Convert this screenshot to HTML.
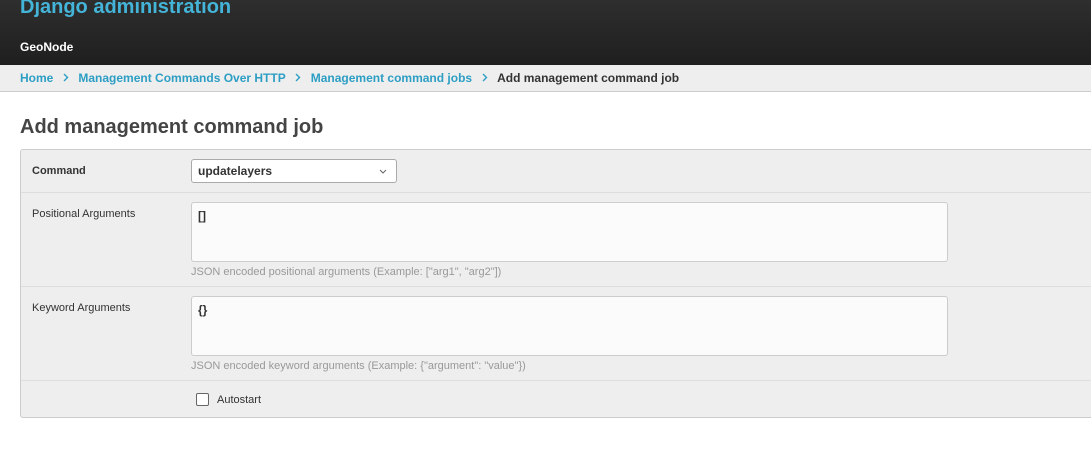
<!DOCTYPE html>
<html><head><meta charset="utf-8"><style>
*{box-sizing:border-box;margin:0;padding:0}
body{width:1091px;height:462px;overflow:hidden;background:#fff;font-family:"Liberation Sans",sans-serif;color:#333}
#header{position:absolute;top:0;left:0;width:1091px;height:65px;background:linear-gradient(#2e2e2e,#1f1f1f)}
#header h1{position:absolute;left:20px;top:-4px;font-size:20px;color:#44b4d8;font-weight:bold}
#header .geo{position:absolute;left:20px;top:40px;font-size:12px;color:#fff;font-weight:bold}
#bc{position:absolute;top:65px;left:0;width:1091px;height:27px;background:#eee;border-bottom:1px solid #ccc;font-size:12px;padding:6px 20px;font-weight:bold;white-space:nowrap}
#bc a{color:#2d9ec4;text-decoration:none}
#bc .s{display:inline-block;width:25px;text-align:center}
#bc .c{color:#333}
h2{position:absolute;left:20px;top:116px;font-size:20px;color:#444;font-weight:bold}
#form{position:absolute;left:20px;top:149px;width:1080px;height:269px;background:#eee;border:1px solid #ccc;border-radius:3px}
.row{position:absolute;left:0;width:1080px;border-bottom:1px solid #ddd}
.lab{position:absolute;left:11px;font-size:11px;color:#333}
.in{position:absolute;left:170px;background:#fbfbfb;border:1px solid #ccc;border-radius:3px;font-size:12px;color:#333;font-weight:bold;padding:6px 6px}
.help{position:absolute;left:170px;font-size:11px;color:#999}
</style></head><body>
<div id="header"><h1>Django administration</h1><div class="geo">GeoNode</div></div>
<div id="bc"><a>Home</a><span class="s"><svg width="6" height="9" viewBox="0 0 6 9"><path d="M1 1l3.5 3.5L1 8" fill="none" stroke="#2d9ec4" stroke-width="1.4"/></svg></span><a>Management Commands Over HTTP</a><span class="s"><svg width="6" height="9" viewBox="0 0 6 9"><path d="M1 1l3.5 3.5L1 8" fill="none" stroke="#2d9ec4" stroke-width="1.4"/></svg></span><a>Management command jobs</a><span class="s"><svg width="6" height="9" viewBox="0 0 6 9"><path d="M1 1l3.5 3.5L1 8" fill="none" stroke="#2d9ec4" stroke-width="1.4"/></svg></span><span class="c">Add management command job</span></div>
<h2>Add management command job</h2>
<div id="form">
 <div class="row" style="top:0;height:43px">
  <div class="lab" style="top:15px;font-weight:bold">Command</div>
  <div class="in" style="top:9px;width:206px;height:24px;background:#fff;border-color:#aaa;padding:4px 6px">updatelayers<svg style="position:absolute;right:9px;top:9px" width="8" height="5" viewBox="0 0 8 5"><path d="M1 1l3 3 3-3" fill="none" stroke="#666" stroke-width="1"/></svg></div>
 </div>
 <div class="row" style="top:43px;height:94px">
  <div class="lab" style="top:15px">Positional Arguments</div>
  <div class="in" style="top:9px;width:757px;height:60px">[]</div>
  <div class="help" style="top:73px">JSON encoded positional arguments (Example: ["arg1", "arg2"])</div>
 </div>
 <div class="row" style="top:137px;height:94px">
  <div class="lab" style="top:15px">Keyword Arguments</div>
  <div class="in" style="top:9px;width:757px;height:60px">{}</div>
  <div class="help" style="top:73px">JSON encoded keyword arguments (Example: {"argument": "value"})</div>
 </div>
 <div class="row" style="top:231px;height:37px;border:none">
  <div style="position:absolute;left:175px;top:12px;width:13px;height:13px;border:1px solid #666;border-radius:2px;background:#fff"></div>
  <div class="lab" style="left:196px;top:13px">Autostart</div>
 </div>
</div>
</body></html>
